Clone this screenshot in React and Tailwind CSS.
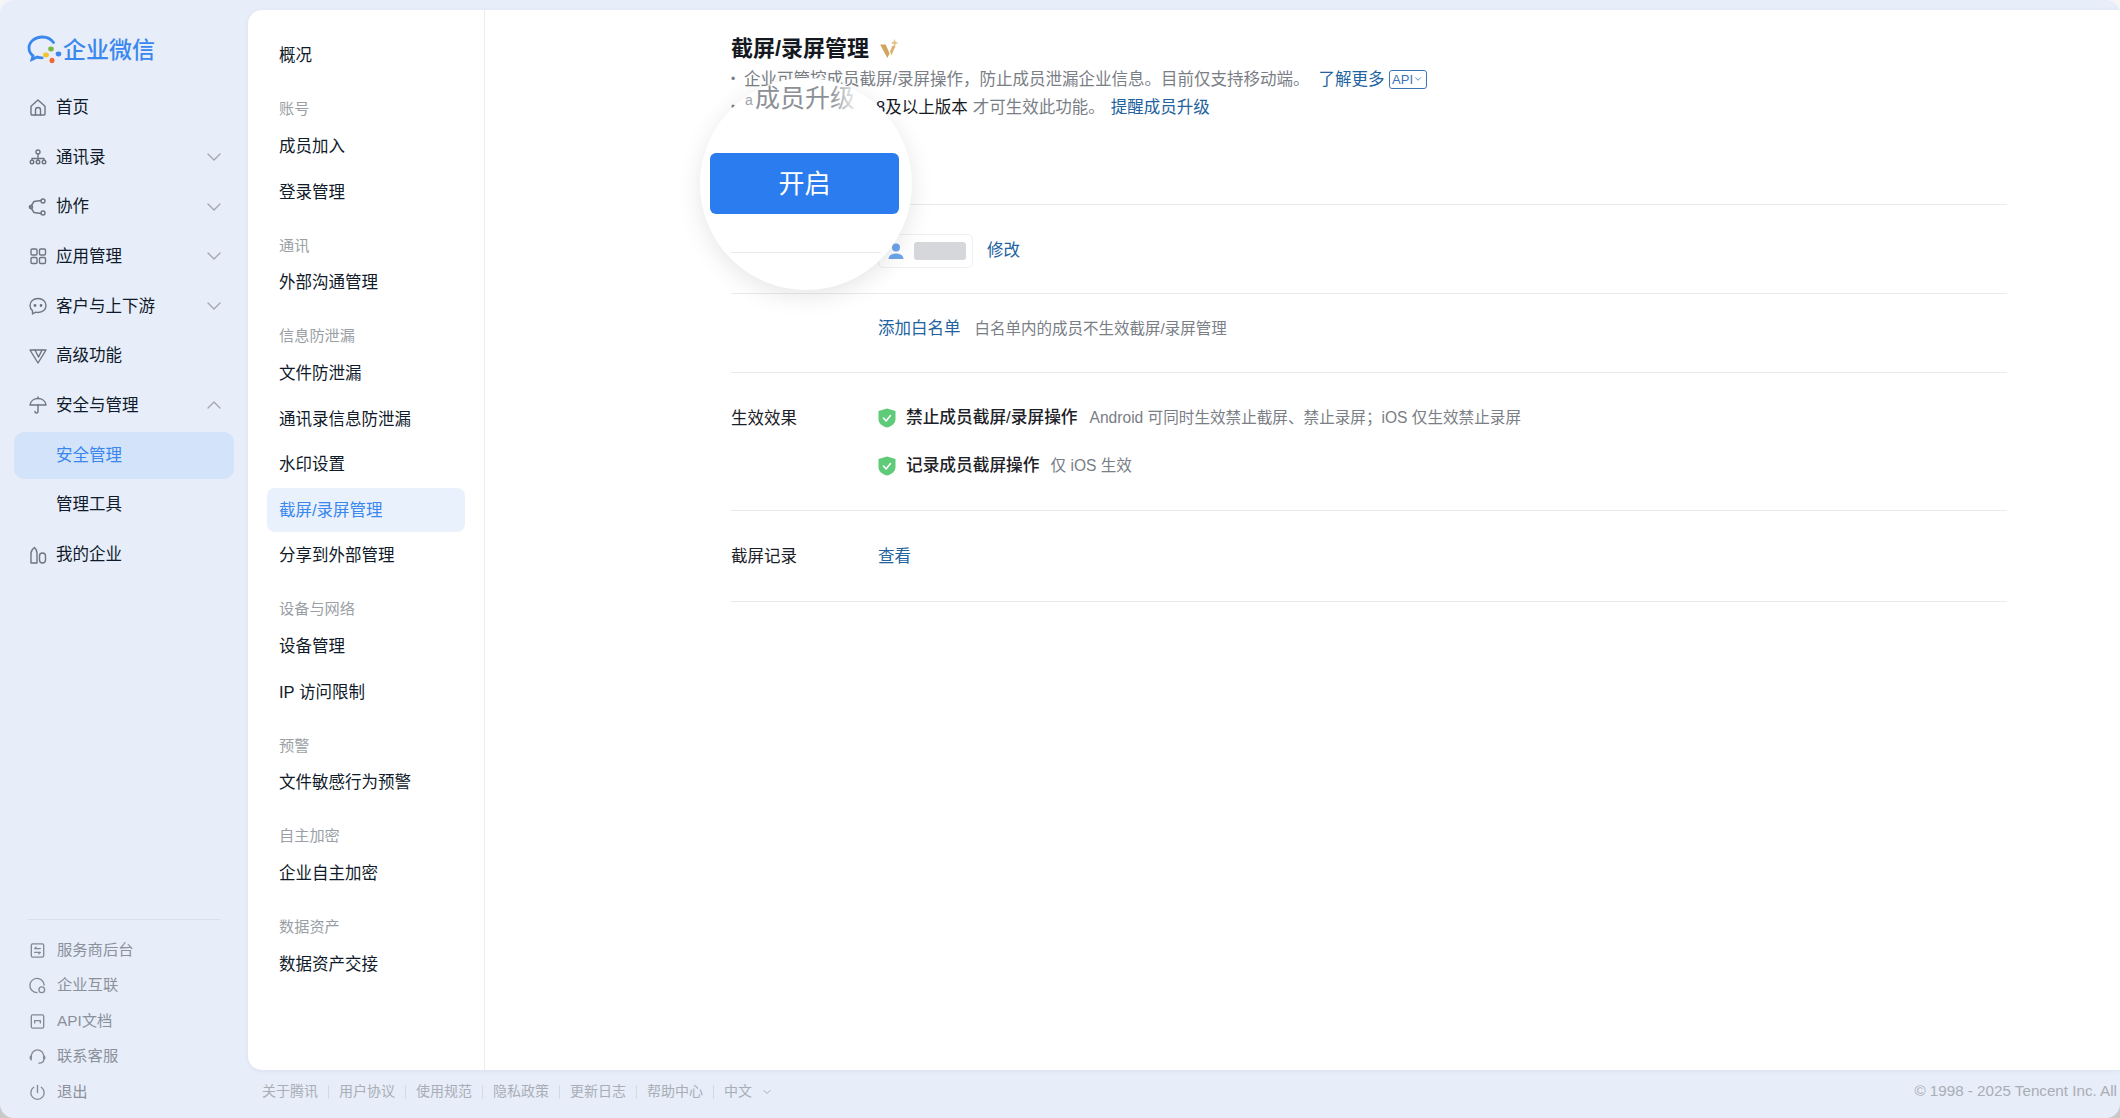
import React from "react";
import { ChevronDown, ChevronUp } from "lucide-react";

const FONT = "font-['Liberation_Sans','Noto_Sans_CJK_SC',sans-serif]";

const icons = {
  home: <><path d="M3 9.200 10 3l7 6.200V17a1 1 0 0 1-1 1H4a1 1 0 0 1-1-1Z" /><path d="M7.500 18v-5a2.500 2.500 0 0 1 5 0v5" /></>,
  org: <><circle cx="10" cy="5" r="2" /><path d="M10 7v3M4 13v-1.500h12V13M10 10v3" /><circle cx="4" cy="15" r="1.800" /><circle cx="10" cy="15" r="1.800" /><circle cx="16" cy="15" r="1.800" /></>,
  collab: <><path d="M13 3.500 6 4.500 2.500 10 6 15.500l7 1" /><circle cx="15" cy="4" r="2" /><circle cx="15" cy="16" r="2" /><circle cx="3" cy="10" r="1.600" /></>,
  apps: <><rect x="3" y="3" width="6" height="6" rx="1.200" /><rect x="11.500" y="3" width="6" height="6" rx="1.200" /><rect x="3" y="11.500" width="6" height="6" rx="1.200" /><rect x="11.500" y="11.500" width="6" height="6" rx="1.200" /></>,
  chat: <><path d="M10 2.500c4.600 0 8 2.900 8 7s-3.400 7-8 7c-.8 0-1.600-.1-2.300-.3L4.500 18v-3.200C3 13.500 2 11.700 2 9.500c0-4.100 3.400-7 8-7Z" /><circle cx="7" cy="9.500" r=".7" fill="currentColor" /><circle cx="13" cy="9.500" r=".7" fill="currentColor" /></>,
  adv: <><path d="M2 4h16l-8 13Z" /><path d="M7 4l3.500 7L14 4" /></>,
  umbrella: <><path d="M2 10c.5-4 4-6.500 8-6.500s7.500 2.500 8 6.500Z" /><path d="M10 3.500V2M10 10v6.500a1.500 1.500 0 0 1-3 0" /></>,
  corp: <><path d="M3 18V8c0-2.500 1.500-4 3.500-5.500C8 4 9 5.500 9 8v10Z" /><rect x="11.500" y="8" width="6" height="10" rx="3" /></>,
  service: <><rect x="3.500" y="3" width="13" height="14" rx="1.500" /><path d="M7 8h6M7 12h6M8.500 6.500 7 8M11.500 13.500 13 12" /></>,
  link: <><path d="M17 9.500a7.500 7.500 0 1 0-7.500 8" /><circle cx="14.500" cy="14.500" r="3" /></>,
  api: <><rect x="3.500" y="3" width="13" height="14" rx="1.500" /><path d="M7 11.500V9h6v2.500" /></>,
  support: <><path d="M3.500 12V9.500a6.500 6.500 0 0 1 13 0V12" /><path d="M3 9.500c-1 1-1 3 .5 4M17 9.500c1 1 1 3-.5 4M16.500 13.500c0 2.500-2 3.500-5 3.500" /></>,
  power: <><path d="M10 2.500V10" /><path d="M6 4.500a7 7 0 1 0 8 0" /></>,
};

function Glyph({ name, className }) {
  return (
    <svg viewBox="0 0 20 20" fill="none" stroke="currentColor" strokeWidth="1.400" strokeLinecap="round" strokeLinejoin="round" className={className}>
      {icons[name]}
    </svg>
  );
}

function Logo() {
  return (
    <svg viewBox="0 0 37 30" className="w-[37px] h-[30px] shrink-0">
      <path d="M27.500 7.500C25 4 21 2 16.500 2 8.500 2 3 7 3 13c0 3.300 1.500 5.800 4 7.800l-1 3.700 5.200-2.400c1.700.5 3.200.7 5 .7" fill="none" stroke="#3a87ee" strokeWidth="2.800" strokeLinecap="round" />
      <ellipse cx="25" cy="14" rx="2.800" ry="2.400" fill="#7cb83f" />
      <ellipse cx="32.500" cy="19" rx="2.800" ry="2.400" fill="#3a87ee" />
      <ellipse cx="20" cy="20" rx="3" ry="2.400" fill="#f4c430" />
      <ellipse cx="26" cy="25.500" rx="2.500" ry="2.800" fill="#ee6a33" />
    </svg>
  );
}

function NavRow({ icon, label, arrow }) {
  return (
    <div className="h-[49.700px] flex items-center pl-[28px] pr-[22px] text-[16.500px] text-[#0f1a2a]">
      <span className="w-[28px] shrink-0">
        {icon && <Glyph name={icon} className="w-[20px] h-[20px] text-[#6e7680]" />}
      </span>
      <span className="flex-1">{label}</span>
      {arrow === "down" && <ChevronDown className="w-[24px] h-[24px] text-[#a0a5ae]" strokeWidth={1.300} />}
      {arrow === "up" && <ChevronUp className="w-[24px] h-[24px] text-[#a0a5ae]" strokeWidth={1.300} />}
    </div>
  );
}

function Sidebar() {
  return (
    <aside className="w-[248px] h-full shrink-0 flex flex-col">
      <div className="h-[82.500px] flex items-center pl-[26px] pt-[18px]">
        <Logo />
        <span className="text-[23px] font-medium text-[#3a87ee] leading-none">企业微信</span>
      </div>
      <NavRow icon="home" label="首页" />
      <NavRow icon="org" label="通讯录" arrow="down" />
      <NavRow icon="collab" label="协作" arrow="down" />
      <NavRow icon="apps" label="应用管理" arrow="down" />
      <NavRow icon="chat" label="客户与上下游" arrow="down" />
      <NavRow icon="adv" label="高级功能" />
      <NavRow icon="umbrella" label="安全与管理" arrow="up" />
      <div className="h-[47px] my-[1.350px] mx-[14px] rounded-[10px] bg-[#d3e3fa] flex items-center pl-[42px] text-[16.500px] text-[#3a87ee]">安全管理</div>
      <NavRow label="管理工具" />
      <NavRow icon="corp" label="我的企业" />
      <div className="flex-1" />
      <div className="mx-[28px] h-px bg-[#d8e0ec] mb-[13px]" />
      <div className="flex flex-col pb-[8px]">
        {[["service", "服务商后台"], ["link", "企业互联"], ["api", "API文档"], ["support", "联系客服"], ["power", "退出"]].map(([i, t]) => (
          <div key={t} className="h-[35.500px] flex items-center pl-[28px] text-[15.300px] text-[#8b919b]">
            <Glyph name={i} className="w-[19px] h-[19px] mr-[10px] text-[#858b95]" />
            {t}
          </div>
        ))}
      </div>
    </aside>
  );
}

const submenu = [
  ["i", "概况"], ["h", "账号"], ["i", "成员加入"], ["i", "登录管理"], ["h", "通讯"], ["i", "外部沟通管理"],
  ["h", "信息防泄漏"], ["i", "文件防泄漏"], ["i", "通讯录信息防泄漏"], ["i", "水印设置"], ["a", "截屏/录屏管理"], ["i", "分享到外部管理"],
  ["h", "设备与网络"], ["i", "设备管理"], ["i", "IP 访问限制"], ["h", "预警"], ["i", "文件敏感行为预警"],
  ["h", "自主加密"], ["i", "企业自主加密"], ["h", "数据资产"], ["i", "数据资产交接"],
];

function SubMenu() {
  return (
    <nav className="w-[237px] shrink-0 border-r border-[#e9ecf0] pt-[23px] px-[19px]">
      {submenu.map(([kind, t]) =>
        kind === "h" ? (
          <div key={t} className="h-[28px] mt-[17.300px] flex items-center px-[12px] text-[15.200px] text-[#9a9fa6]">{t}</div>
        ) : kind === "a" ? (
          <div key={t} className="h-[45.500px] flex items-center">
            <div className="h-[44px] w-full rounded-[8px] bg-[#e9f1fd] flex items-center px-[12px] text-[16.500px] text-[#3a87ee]">{t}</div>
          </div>
        ) : (
          <div key={t} className="h-[45.500px] flex items-center px-[12px] text-[16.500px] text-[#0f1a2a]">{t}</div>
        )
      )}
    </nav>
  );
}

function Shield() {
  return (
    <svg viewBox="0 0 18 20" className="w-[18px] h-[20px] shrink-0">
      <path d="M9 .5 17.500 3v8c0 4.500-3.500 7-8.500 8.500C4 18 .5 15.500.5 11V3Z" fill="#5ecb78" />
      <path d="m5.500 10 2.600 3 4.400-5.500" fill="none" stroke="#fff" strokeWidth="1.600" strokeLinecap="round" strokeLinejoin="round" />
    </svg>
  );
}

function Star() {
  return (
    <svg viewBox="0 0 18 18" className="w-[20px] h-[20px]">
      <path d="M1 5h5l3.500 8-2 4Z" fill="#d2a55e" />
      <path d="M10 11 12 6h3l-4 9Z" fill="#d9b272" />
      <path d="m14 0 1 2.500 2.500 1-2.500 1-1 2.500-1-2.500-2.500-1 2.500-1Z" fill="#e3c488" />
    </svg>
  );
}

function Content() {
  const link = "text-[#21629f]";
  return (
    <main className="flex-1 min-w-0 pl-[246px] pr-[113px] pt-[27px] relative text-[16.500px]">
      <div className="flex items-center gap-[10px] h-[24px]">
        <h1 className="text-[22px] font-bold text-[#15191f] leading-none">截屏/录屏管理</h1>
        <Star />
      </div>
      <div className="mt-[4px] h-[28px] flex items-center text-[#7a7e85] whitespace-nowrap">
        <span className="w-[13px] text-[12px]">•</span>
        企业可管控成员截屏/录屏操作，防止成员泄漏企业信息。目前仅支持移动端。
        <span className={`${link} ml-[9px]`}>了解更多</span>
        <span className="ml-[4px] h-[19px] w-[38px] border border-[#3c74b8] rounded-[3px] text-[13px] leading-none text-[#3c74b8] flex items-center justify-center">API<ChevronDown className="w-[10px] h-[10px]" /></span>
      </div>
      <div className="h-[28px] flex items-center text-[#7a7e85] whitespace-nowrap">
        <span className="w-[14px] text-[12px]">•</span>
        <span className="text-[#16191f]">需成员升级至 4.1.8及以上版本</span>
        <span className="ml-[5px]">才可生效此功能。</span>
        <span className={`${link} ml-[6px]`}>提醒成员升级</span>
      </div>
      <div className="h-[84px] border-b border-[#e8eaed]" />
      <div className="h-[89px] flex items-center pl-[147px] pt-[3px] border-b border-[#e8eaed]">
        <div className="h-[34px] w-[95px] border border-[#edeff2] rounded-[5px] flex items-center pl-[8px] gap-[9px]">
          <svg viewBox="0 0 18 18" className="w-[18px] h-[18px] text-[#6da6ec]" fill="currentColor"><circle cx="9" cy="5.500" r="4" /><path d="M1.500 17c.3-3.500 3-5.500 7.500-5.500s7.200 2 7.500 5.500Z" /></svg>
          <span className="w-[52px] h-[18px] rounded-[3px] bg-[#d5d7da]" />
        </div>
        <span className={`${link} ml-[14px]`}>修改</span>
      </div>
      <div className="h-[79px] flex items-center pl-[147px] pb-[9px] border-b border-[#e8eaed]">
        <span className={link}>添加白名单</span>
        <span className="ml-[14px] text-[15.500px] text-[#7a7e85]">白名单内的成员不生效截屏/录屏管理</span>
      </div>
      <div className="h-[138px] flex border-b border-[#e8eaed] pt-[33px]">
        <span className="w-[147px] shrink-0 leading-[24px] text-[#1c2027]">生效效果</span>
        <div className="flex flex-col gap-[24px] leading-[24px]">
          <div className="flex items-center">
            <Shield />
            <span className="ml-[10px] font-medium text-[16.700px] text-[#1c2027]">禁止成员截屏/录屏操作</span>
            <span className="ml-[12px] text-[15.600px] text-[#7a7e85]">Android 可同时生效禁止截屏、禁止录屏；iOS 仅生效禁止录屏</span>
          </div>
          <div className="flex items-center">
            <Shield />
            <span className="ml-[10px] font-medium text-[16.700px] text-[#1c2027]">记录成员截屏操作</span>
            <span className="ml-[11px] text-[15.600px] text-[#7a7e85]">仅 iOS 生效</span>
          </div>
        </div>
      </div>
      <div className="h-[91px] flex items-center border-b border-[#e8eaed]">
        <span className="w-[147px] shrink-0 text-[#1c2027]">截屏记录</span>
        <span className={link}>查看</span>
      </div>

      <div className="absolute left-[215px] top-[68px] w-[212px] h-[212px] rounded-full bg-white shadow-[0_6px_24px_rgba(0,0,0,0.1)] overflow-hidden">
        <span className="absolute left-[55px] top-[2px] text-[25px] text-[#8b8f96] whitespace-nowrap">成员升级</span>
        <span className="absolute left-[45px] top-[12px] text-[14px] text-[#a0a4aa]">a</span>
        <div className="absolute left-[130px] top-[6px] w-[30px] h-[34px] bg-linear-to-r from-transparent to-white" />
        <div className="absolute left-[10px] top-[75px] w-[189px] h-[61px] rounded-[6px] bg-[#2b7def] flex items-center justify-center pt-[1px] text-[26px] text-white">开启</div>
        <div className="absolute left-[31px] top-[174px] w-[150px] h-px bg-[#e8eaed]" />
      </div>
    </main>
  );
}

const footLinks = ["关于腾讯", "用户协议", "使用规范", "隐私政策", "更新日志", "帮助中心"];

function Footer() {
  return (
    <footer className="h-[47px] flex items-center justify-between pl-[14px] pr-[3px] pb-[4px] text-[14px] text-[#a9aeb6] whitespace-nowrap">
      <div className="flex items-center">
        {footLinks.map((t) => (
          <React.Fragment key={t}>
            <span>{t}</span>
            <span className="w-px h-[14px] bg-[#d4dae4] mx-[10px]" />
          </React.Fragment>
        ))}
        <span>中文</span>
        <ChevronDown className="w-[12px] h-[12px] ml-[9px]" />
      </div>
      <span className="text-[15.200px]">© 1998 - 2025 Tencent Inc. All</span>
    </footer>
  );
}

export default function App() {
  return (
    <div className={`${FONT} w-[2120px] h-[1118px] overflow-hidden bg-linear-to-b from-[#f6f6f6] to-[#c9c9c9]`}>
      <div className="w-full h-full rounded-[14px] bg-[#e7edf9] flex overflow-hidden">
        <Sidebar />
        <div className="flex-1 min-w-0 flex flex-col pt-[10px]">
          <div className="h-[1060px] flex bg-white rounded-l-[14px] shadow-[0_1px_4px_rgba(60,80,120,0.08)]">
            <SubMenu />
            <Content />
          </div>
          <Footer />
        </div>
      </div>
    </div>
  );
}
